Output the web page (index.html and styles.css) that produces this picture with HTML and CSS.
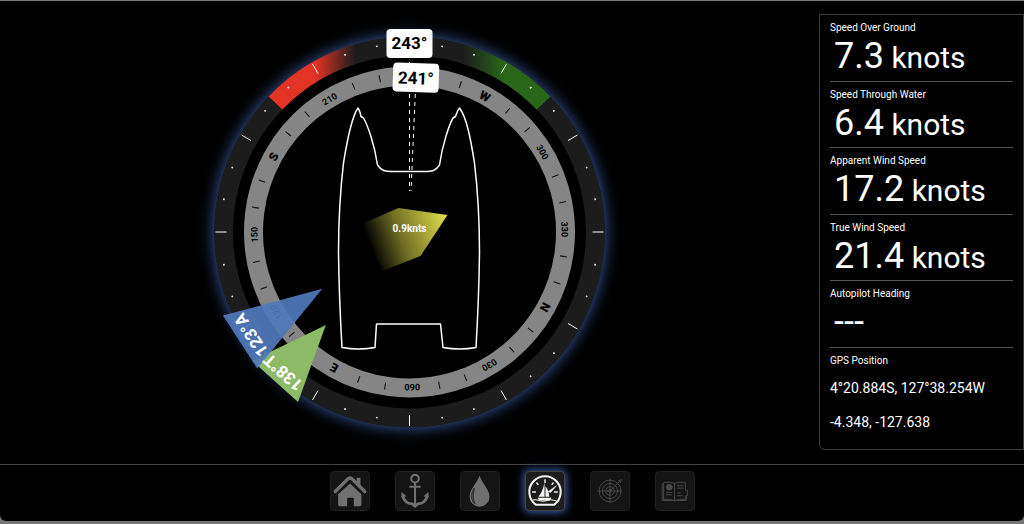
FILE: index.html
```
<!DOCTYPE html>
<html lang="en">
<head>
    <meta charset="UTF-8">
    <title>Sailing</title>
    <link rel="stylesheet" href="styles.css">
</head>
<body>
    <div class="app">
        <main class="main">
            <svg class="compass" viewBox="-232 -231 464 463">
                <defs>
                    <linearGradient id="port" gradientUnits="userSpaceOnUse" x1="-94" y1="0" x2="-54" y2="0">
                        <stop offset="0" stop-color="#e23324"/>
                        <stop offset="1" stop-color="#e23324" stop-opacity="0"/>
                    </linearGradient>
                    <linearGradient id="starboard" gradientUnits="userSpaceOnUse" x1="94" y1="0" x2="54" y2="0">
                        <stop offset="0" stop-color="#29661a"/>
                        <stop offset="1" stop-color="#29661a" stop-opacity="0"/>
                    </linearGradient>
                    <linearGradient id="tide" gradientUnits="userSpaceOnUse" x1="-42" y1="8" x2="36" y2="-20">
                        <stop offset="0" stop-color="#e2e04a" stop-opacity="0"/>
                        <stop offset="0.4" stop-color="#e2e04a" stop-opacity="0.5"/>
                        <stop offset="1" stop-color="#e2e04a"/>
                    </linearGradient>
                </defs>

                <!-- outer ring -->
                <circle class="glow" r="195"/>
                <circle class="bezel" r="186"/>
                <path class="sector" stroke="url(#port)" d="M-134 -129A186 186 0 0 1 -45 -180.500"/>
                <path class="sector" stroke="url(#starboard)" d="M134 -129A186 186 0 0 0 45 -180.500"/>
                <path class="marks" d="M0 -183V-194M91.500 -158.500L97 -168M158.500 -91.500L168 -97M183 0H194M158.500 91.500L168 97M91.500 158.500L97 168M0 183V194M-91.500 158.500L-97 168M-158.500 91.500L-168 97M-183 0H-194M-158.500 -91.500L-168 -97M-91.500 -158.500L-97 -168"/>
                <circle class="marks" r="188.500" pathLength="360" stroke-width="1.600" stroke-dasharray="0 9.750 0.500 9.500 0.500 9.750"/>

                <!-- heading card -->
                <g transform="rotate(-241)">
                    <circle class="card" r="156"/>
                    <circle class="ticks" r="156" pathLength="360" stroke-dasharray="0 9.800 0.400 9.600 0.400 9.800"/>
                    <g class="degrees">
                        <text class="point" y="-151" transform="rotate(0)">N</text>
                        <text y="-152" transform="rotate(30)">030</text>
                        <text y="-152" transform="rotate(60)">060</text>
                        <text class="point" y="-151" transform="rotate(90)">E</text>
                        <text y="-152" transform="rotate(120)">120</text>
                        <text y="-152" transform="rotate(150)">150</text>
                        <text class="point" y="-151" transform="rotate(180)">S</text>
                        <text y="-152" transform="rotate(210)">210</text>
                        <text y="-152" transform="rotate(240)">240</text>
                        <text class="point" y="-151" transform="rotate(270)">W</text>
                        <text y="-152" transform="rotate(300)">300</text>
                        <text y="-152" transform="rotate(330)">330</text>
                    </g>
                </g>

                <!-- boat -->
                <path class="hull" d="M-51.500 -124C-58 -115 -62 -94 -66 -69C-70 -35 -71 -10 -71 20C-70.500 60 -69 90 -67.500 115.500Q-51 118.500 -34.500 115.500L-33 92H31L33.500 115.500Q50 118.500 66.500 115.500C68 90 69.500 60 70 20C70 -10 69 -35 65 -69C61 -94 57 -115 50 -124C48 -122 47 -118 46 -115.500L43.500 -114C40 -108 33 -88 30 -67C26 -61 22 -60.500 17 -60.500H-18C-24 -60.500 -28 -61 -32 -67C-35 -88 -42 -107 -46 -114L-48.500 -115.500C-49 -118 -50 -122 -51.500 -124Z"/>
                <path class="course" d="M0 -170V-41"/>
                <path class="course" d="M6.500 -154L1.500 -41"/>

                <!-- tide -->
                <path fill="url(#tide)" d="M-11 -24L38 -17L11 24L-27 39L-48 -8Z"/>
                <text class="tide" y="0">0.9knts</text>

                <!-- wind angles -->
                <path class="true" transform="rotate(-138)" d="M0 -125L31 -201H-31Z"/>
                <path class="apparent" transform="rotate(-123)" d="M0 -104L31.500 -202H-31.500Z"/>
                <text class="wind" y="-183" transform="rotate(-123)">123°A</text>
                <text class="wind" y="-183" transform="rotate(-138)">138°T</text>

                <!-- headings -->
                <rect class="plate" x="-23" y="-203" width="46" height="29" rx="4"/>
                <text class="heading" y="-183">243°</text>
                <g transform="rotate(2)">
                    <rect class="plate" x="-22" y="-169" width="46" height="29" rx="4"/>
                    <text class="heading" x="1" y="-148">241°</text>
                </g>
            </svg>

            <aside class="panel">
                <section class="reading">
                    <h2>Speed Over Ground</h2>
                    <p class="value"><b>7.3</b> knots</p>
                </section>
                <section class="reading">
                    <h2>Speed Through Water</h2>
                    <p class="value"><b>6.4</b> knots</p>
                </section>
                <section class="reading">
                    <h2>Apparent Wind Speed</h2>
                    <p class="value"><b>17.2</b> knots</p>
                </section>
                <section class="reading">
                    <h2>True Wind Speed</h2>
                    <p class="value"><b>21.4</b> knots</p>
                </section>
                <section class="reading">
                    <h2>Autopilot Heading</h2>
                    <p class="value"><b>---</b></p>
                </section>
                <section class="reading">
                    <h2>GPS Position</h2>
                    <p class="position">4°20.884S, 127°38.254W</p>
                    <p class="position">-4.348, -127.638</p>
                </section>
            </aside>
        </main>

        <nav class="nav">
            <button type="button" aria-label="Home">
                <svg viewBox="0 0 40 40">
                    <path d="M27 6h4v8l-4-4z" fill="#707070"/>
                    <path d="M4.500 20.500L17.500 7.500Q20 5 22.500 7.500L35.500 20.500" fill="none" stroke="#707070" stroke-width="3.500" stroke-linecap="round"/>
                    <path d="M20 12L32 23.500V34Q32 36 30 36H24V28Q24 27 23 27H18Q17 27 17 28V36H9.500Q7.500 36 7.500 34V23.500Z" fill="#707070"/>
                </svg>
            </button>
            <button type="button" aria-label="Anchor">
                <svg viewBox="0 0 40 40" fill="none" stroke="#707070" stroke-width="2.200">
                    <circle cx="20" cy="7" r="4"/>
                    <path d="M14 15.500H26M20 11V35"/>
                    <path d="M7 25Q9 33 17 33.500L20 36L23 33.500Q31 33 33 25" stroke-width="3"/>
                    <path d="M5.500 26.500L6 21L11 25.500ZM34.500 26.500L34 21L29 25.500Z" fill="#707070" stroke="none"/>
                </svg>
            </button>
            <button type="button" aria-label="Water">
                <svg viewBox="0 0 40 40">
                    <path d="M19.500 4C23 13 30 19 30 26A10.500 10.500 0 0 1 9 26C9 19 16 13 19.500 4Z" fill="#707070"/>
                    <path d="M14 17C10 23 10 30 15 34C12.500 29 12.500 24 14 17Z" fill="#555" stroke="#1c1c1c" stroke-width="0.800"/>
                </svg>
            </button>
            <button type="button" aria-label="Sailing" class="current">
                <svg viewBox="0 0 40 40" fill="none" stroke="#f2f2f0" stroke-width="1.500">
                    <path d="M10.500 34.500A16.500 16.500 0 1 1 29.500 34.500Z" stroke-width="2.200" stroke-linejoin="round"/>
                    <path d="M20 7.500V11.500M11 11L13 13.500M29 11L27 13.500M6.500 21H10.500M29.500 21H33.500"/>
                    <path d="M5.500 30Q10 28.500 14 30T22 30T30 30T35 30" stroke-width="1.200"/>
                    <path d="M19.500 11V26H13Q17.500 21 19.500 11ZM20.500 15Q24 19 24.500 26H20.500ZM12 27H27L25 30H14Z" fill="#f2f2f0" stroke="none"/>
                    <path d="M23.500 20.500L32 14.500L26 21.500Z" fill="#f2f2f0" stroke-width="0.600"/>
                </svg>
            </button>
            <button type="button" aria-label="Radar">
                <svg viewBox="0 0 40 40" fill="none" stroke="#4a4a4a">
                    <circle cx="20" cy="20" r="11.500"/>
                    <circle cx="20" cy="20" r="8"/>
                    <circle cx="20" cy="20" r="4.500"/>
                    <circle cx="20" cy="20" r="1.500"/>
                    <path d="M20 7V33M7 20H33M20 20L31 9M28.500 9.500L32 8L30.500 11.500" stroke-width="0.900"/>
                </svg>
            </button>
            <button type="button" aria-label="Logbook">
                <svg viewBox="0 0 40 40" fill="none" stroke="#4a4a4a">
                    <path d="M8 11Q14 10 19.500 12Q25 10 31 11V19H33V25H31V29Q25 28 19.500 30Q14 28 8 29ZM19.500 12V30M6.500 12V30H19L20 31L21 30H32V26"/>
                    <path d="M10.500 21.500H17M10.500 24H17M22 14.500H29M22 17H29M22 22H26M22 25H28"/>
                    <circle cx="14" cy="16" r="3" fill="#4a4a4a"/>
                </svg>
            </button>
        </nav>
    </div>
</body>
</html>
```
FILE: styles.css
```
*{
    box-sizing: border-box;
    margin: 0;
    padding: 0;
}
body{
    height: 100vh;
    padding: 1px 0 3px;
    background: #777;
    color: #fff;
    font-family: Roboto, sans-serif;
}
.app{
    height: 100%;
    display: flex;
    flex-direction: column;
    background: #000;
    border-radius: 0 0 6px 6px;
}
.main{
    flex: 1;
    min-height: 0;
    display: flex;
}

/* compass */
.compass{
    flex: 1;
    min-width: 0;
    height: 100%;
    overflow: visible;
}
.compass text{
    text-anchor: middle;
    font-weight: bold;
}
.glow{
    fill: #000;
    filter: drop-shadow(0 0 8px #3f63b0);
}
.bezel{
    fill: none;
    stroke: #1c1c1c;
    stroke-width: 19px;
}
.sector{
    fill: none;
    stroke-width: 19px;
}
.marks{
    fill: none;
    stroke: #fff;
}
.card{
    fill: none;
    stroke: #858585;
    stroke-width: 19px;
}
.ticks{
    fill: none;
    stroke: #111;
    stroke-width: 7px;
}
.degrees{
    fill: #000;
    font-size: 9px;
}
.degrees .point{
    font-size: 12px;
    font-weight: 900;
}
.hull{
    fill: none;
    stroke: #fff;
    stroke-width: 1.5px;
    stroke-linejoin: round;
}
.course{
    fill: none;
    stroke: #fff;
    stroke-width: 1px;
    stroke-dasharray: 4 4;
}
.tide{
    fill: #fff;
    font-size: 10px;
}
.true{
    fill: #8cba66;
}
.apparent{
    fill: #5078bc;
    fill-opacity: 0.92;
}
.wind{
    fill: #fff;
    font-size: 17px;
}
.plate{
    fill: #fff;
}
.heading{
    fill: #000;
    font-size: 17px;
}

/* readings */
.panel{
    width: 205px;
    margin: 13px 0 14px;
    padding: 0 10px;
    display: grid;
    grid-template-rows: repeat(5, 1fr) 101px;
    border: 1px solid #3c3c3c;
    border-radius: 0 0 0 6px;
}
.reading{
    padding-top: 5px;
    border-bottom: 1px solid #555;
}
.reading:last-child{
    border-bottom: none;
}
.reading h2{
    font-size: 10px;
    font-weight: normal;
    line-height: 15px;
}
.value{
    padding-left: 4px;
    font-size: 30px;
    line-height: 42px;
}
.value b{
    font-size: 36px;
    font-weight: normal;
}
.position{
    padding: 10px 0 4px;
    font-size: 14px;
    line-height: 20px;
}

/* bottom bar */
.nav{
    padding: 6px 0 10px;
    display: flex;
    justify-content: center;
    gap: 25px;
    border-top: 1px solid #444;
}
.nav button{
    width: 40px;
    height: 40px;
    background: #141414;
    border: 1px solid #202020;
    border-radius: 4px;
    cursor: pointer;
}
.nav svg{
    display: block;
    width: 100%;
    height: 100%;
}
.nav .current{
    background: #1c1c1c;
    border-color: #444;
    box-shadow: 0 0 8px 1px #3f63b0;
}
```
